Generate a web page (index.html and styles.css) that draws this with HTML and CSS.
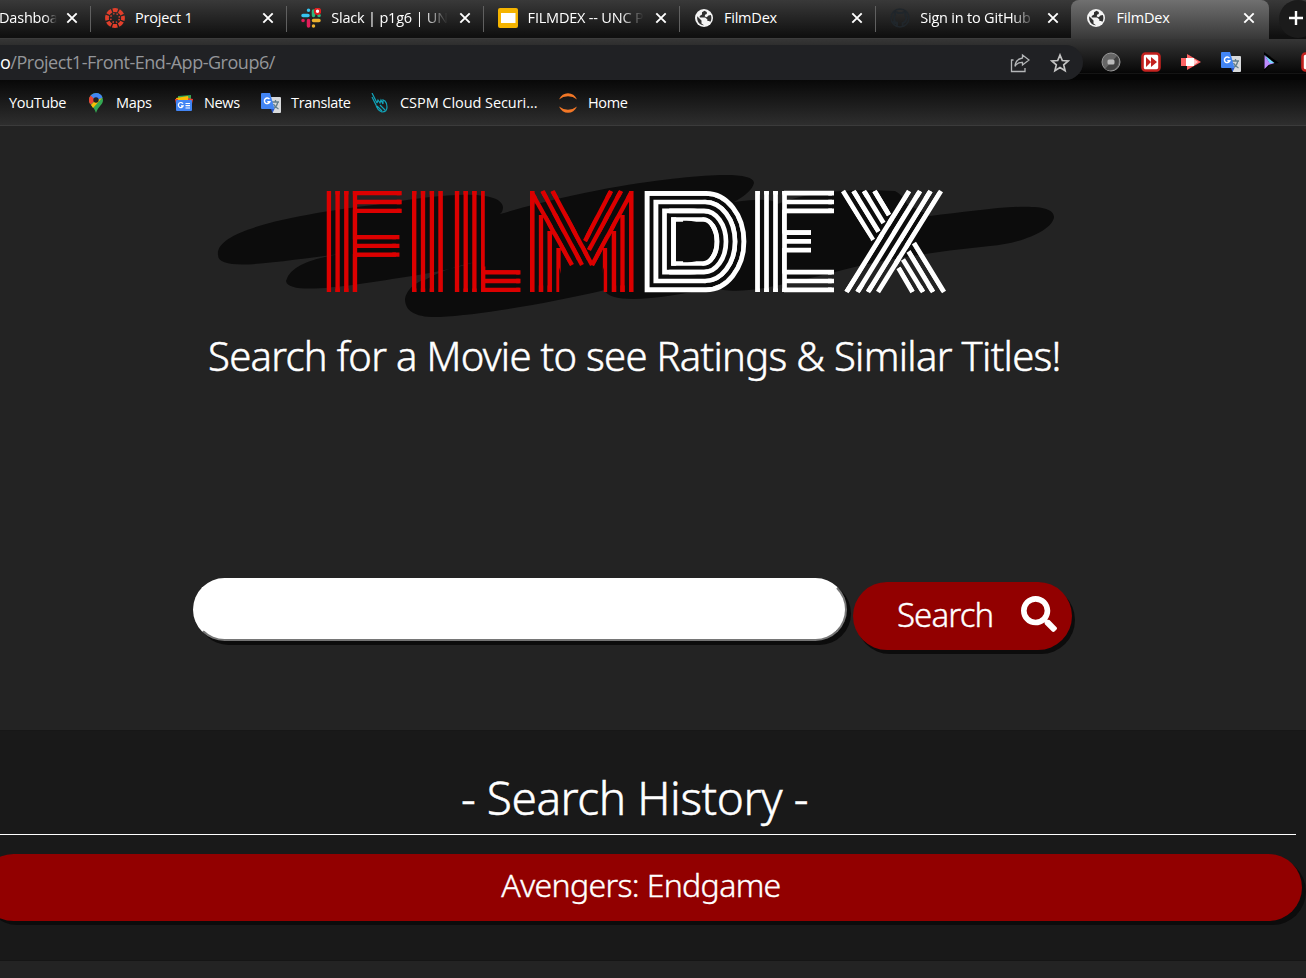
FILE: index.html
```html
<!DOCTYPE html>
<html lang="en">
<head>
<meta charset="utf-8">
<title>FilmDex</title>
<link rel="stylesheet" href="styles.css">
</head>
<body>
<svg class="defs" width="0" height="0" aria-hidden="true">
  <symbol id="x" viewBox="0 0 12 12"><path d="M1.3 1.3 10.7 10.7M10.7 1.3 1.3 10.7" stroke="#fff" stroke-width="1.9"/></symbol>
  <symbol id="globe" viewBox="0 0 20 20"><circle cx="10" cy="10" r="9" fill="#f4f4f4"/><path d="M3.2 8.2 7.5 12.4v3L10 17.2c-4 .3-7.4-3.4-6.8-9ZM10.5 2.8 8 4.2v2.3L5.7 8v1.4h5.5l2.2 2v1.7h1.8l1 1c1.4-2 1.6-4.5.6-7l-2.4.4-1.6 1.7-2-.8.2-1.6 1.8-.8V4Z" fill="#303030"/></symbol>
  <symbol id="gt" viewBox="0 0 20 20"><path d="M8 4h11q1 0 1 1v14q0 1-1 1h-7Z" fill="#d8dadc"/><path d="M11 9h7M14.5 7v2M16.800 9q-1 5-5 7M12.500 11q1 3 5 5" stroke="#607d8b" stroke-width="1.300" fill="none"/><path d="m10 16 3.500 0-2 4Z" fill="#2854c5"/><path d="M1 0h8l4.500 16H1q-1 0-1-1V1q0-1 1-1Z" fill="#4285f4"/><path d="M8.500 6.200A2.800 2.800 0 1 0 8.900 8.700H6.300" stroke="#fff" stroke-width="1.400" fill="none"/></symbol>
</svg>

<header class="browser">
  <nav class="tabs">
    <div class="tab tab-first"><span class="title fade">Dashboa</span><svg class="close"><use href="#x"/></svg></div>
    <div class="tab"><svg class="fav" viewBox="0 0 20 20"><circle cx="10" cy="10" r="8" fill="none" stroke="#e13f2b" stroke-width="3.800" stroke-dasharray="4.900 1.383" stroke-dashoffset="2.450"/><circle cx="10" cy="10" r="4.400" fill="none" stroke="#e13f2b" stroke-width="1.500" stroke-dasharray="1.400 2.056" stroke-dashoffset="-1"/></svg><span class="title">Project 1</span><svg class="close"><use href="#x"/></svg></div>
    <div class="tab"><svg class="fav" viewBox="0 0 20 20"><g stroke-width="3.500" stroke-linecap="round"><path d="M2 7.500h5M7.500 2.200v.1" stroke="#36c5f0"/><path d="M12.500 3v4.500M18 7.500h.1" stroke="#2eb67d"/><path d="M12.500 12.500H18M12.500 18v.1" stroke="#ecb22e"/><path d="M7.500 12.500V18M2 12.500h.1" stroke="#e01e5a"/></g><circle cx="16.500" cy="3.300" r="2.700" fill="#fff" stroke="#e02020" stroke-width="2"/></svg><span class="title fade">Slack | p1g6 | UNC</span><svg class="close"><use href="#x"/></svg></div>
    <div class="tab"><svg class="fav" viewBox="0 0 20 20"><rect width="20" height="20" rx="2" fill="#f5b400"/><rect x="3" y="5" width="14.500" height="10" fill="#fff"/></svg><span class="title fade">FILMDEX -- UNC P</span><svg class="close"><use href="#x"/></svg></div>
    <div class="tab"><svg class="fav"><use href="#globe"/></svg><span class="title">FilmDex</span><svg class="close"><use href="#x"/></svg></div>
    <div class="tab"><svg class="fav" viewBox="0 0 20 20"><path d="M7 19v-4q-3 1-4-2m4 2q-3-1-3-5 0-2 1-3-.500-2 .2-3Q7 4 8 5h4q1.500-1 3-1 .600 1.500.2 3 1 1 1 3 0 4-3.500 5v4" fill="none" stroke="#20262b" stroke-width="2"/><circle cx="10" cy="10" r="9" fill="none" stroke="#20262b" stroke-width="1.500"/></svg><span class="title fade">Sign in to GitHub</span><svg class="close"><use href="#x"/></svg></div>
    <div class="tab active"><svg class="fav"><use href="#globe"/></svg><span class="title">FilmDex</span><svg class="close"><use href="#x"/></svg></div>
    <div class="newtab"><svg width="16" height="16" viewBox="0 0 16 16"><path d="M8 1v14M1 8h14" stroke="#fff" stroke-width="2.400"/></svg></div>
  </nav>
  <div class="toolbar">
    <div class="omnibox">
      <span class="url"><b>o</b>/Project1-Front-End-App-Group6/</span>
      <svg class="share" viewBox="0 0 20 20"><path d="M3.500 7H1.500v11.500H15v-3.500M12.500 2l6.500 5-6.500 5V9.300q-5-.300-7.500 4Q5.500 6 12.500 5Z" fill="none" stroke="#b4b6b8" stroke-width="1.300"/></svg>
      <svg class="star" viewBox="0 0 20 20"><path d="m10 2 2.300 5.500 5.900.500-4.500 3.900 1.400 5.900-5.100-3.200-5.100 3.200 1.400-5.900L1.800 8l5.900-.500Z" fill="none" stroke="#c4c4c4" stroke-width="1.700"/></svg>
    </div>
    <div class="extensions">
      <svg viewBox="0 0 20 20"><circle cx="10" cy="10" r="9" fill="#666" stroke="#999"/><path d="m16 4-12 13a9 9 0 0 0 12-13" fill="#3f3f3f"/><rect x="6.500" y="7.500" width="7" height="5" rx="1.500" fill="#bbb"/></svg>
      <svg viewBox="0 0 20 20"><rect x="1.500" y="1.500" width="17" height="17" rx="3" fill="#fff" stroke="#c3221f" stroke-width="2.600"/><path d="m5 5 5 5-5 5Zm5 0 6 5-6 5Z" fill="#c3221f"/></svg>
      <svg viewBox="0 0 20 20"><path d="M0 6h6V2l14 8-14 8v-4H0Z" fill="#ff6464"/><path d="M5 6h8v8H5Z" fill="#fff"/><path d="m13 7 4 3-4 3Z" fill="#ffc8c8"/></svg>
      <svg viewBox="0 0 20 20"><use href="#gt"/></svg>
      <svg viewBox="0 0 20 20"><path d="m3 0 15 11-8 1-7 7Z" fill="#000"/><path d="m3.500 3 10 8-5 .500Z" fill="#78d8ff"/><path d="m3.500 3 5 8 5 0-6 2-4 4Z" fill="#bd8cff"/></svg>
      <svg viewBox="0 0 20 20"><rect x="1.500" y="1.500" width="17" height="17" rx="3" fill="#fff" stroke="#c3221f" stroke-width="2.600"/></svg>
    </div>
  </div>
  <nav class="bookmarks">
    <span class="mark m-youtube">YouTube</span>
    <span class="mark m-maps"><svg viewBox="0 0 20 20"><path d="M10 0A7 7 0 0 0 3 7c0 5 5 6 7 13 2-7 7-8 7-13a7 7 0 0 0-7-7Z" fill="#34a853"/><path d="M10 7 4.800 11.500Q3 9 3 7q0-2 1.400-4Z" fill="#ea4335"/><path d="M10 7 5 12l2 3 9-10Z" fill="#fbbc04"/><path d="M4.500 2.500Q7 0 10 0q5 0 6.500 4.500L10 8Z" fill="#4285f4"/><path d="m4.400 2.600 4 3.300L4 11Q2 7 4.400 2.600Z" fill="#ea4335"/><circle cx="10" cy="7" r="2.700" fill="#202124"/></svg>Maps</span>
    <span class="mark m-news"><svg viewBox="0 0 20 20"><path d="m4 3 13-1v6H4Z" fill="#34a853"/><path d="m2 5 12-2 1 5H3Z" fill="#fbbc04"/><path d="m14 5 5 1-1 5h-4Z" fill="#ea4335"/><path d="m1 6 3 0v8H2.500Z" fill="#ea4335"/><rect x="2" y="7" width="16" height="11" rx="1" fill="#4285f4"/><path d="M9 10.800a2.500 2.500 0 1 0 .2 2H7M11.500 10.500H16M11.500 12.700H16M11.500 15H16" stroke="#fff" stroke-width="1.200" fill="none"/></svg>News</span>
    <span class="mark m-translate"><svg viewBox="0 0 20 20"><use href="#gt"/></svg>Translate</span>
    <span class="mark m-cspm"><svg viewBox="0 0 20 20"><path d="m2 0 5 10M2 4l4 8q1 5 6 7 5 0 5-5 0-4-2-6l-2-1v4M7 10l1-3 2 3 1-3 2 4M7 13l5 5M10 12l5 5" fill="none" stroke="#11a5ba" stroke-width="1.200"/></svg><span class="mark-name">CSPM Cloud Securi...</span></span>
    <span class="mark m-home"><svg viewBox="0 0 20 20"><path d="M1 6.500Q4 .2 10 .2t9 6.300Q15 3.300 10 3.300T1 6.500ZM1 13.500q3 6.300 9 6.300t9-6.300q-4 3.200-9 3.200t-9-3.200Z" fill="#f37726"/></svg>Home</span>
  </nav>
</header>

<main>
  <section class="hero">
    <h1 class="brand">
      <svg class="logo" width="860" height="160" viewBox="210 166 860 160" role="img" aria-label="FILMDEX">
        <defs>
          <pattern id="stripe-f" patternUnits="userSpaceOnUse" x="0" y="0" width="1306" height="400">
            <path d="M328.900 191v101M337.600 191v101M346.300 191v101M355 191v101M355 193.200h46.700M355 202h46.700M355 210.800h46.700M355 237.100h44.800M355 245.900h44.800M355 254.600h44.800" stroke="#dc0000" stroke-width="4.300"/>
          </pattern>
          <pattern id="stripe-i" patternUnits="userSpaceOnUse" x="0" y="0" width="1306" height="400">
            <path d="M414.200 191v101M423 191v101M431.900 191v101M440.700 191v101" stroke="#dc0000" stroke-width="4.300"/>
          </pattern>
          <pattern id="stripe-l" patternUnits="userSpaceOnUse" x="0" y="0" width="1306" height="400">
            <path d="M457 191v101M465.700 191v101M474.400 191v101M483.200 191v101M483 272.300h37.500M483 281h37.500M483 289.800h37.500" stroke="#dc0000" stroke-width="4.300"/>
          </pattern>
          <pattern id="stripe-m" patternUnits="userSpaceOnUse" x="0" y="0" width="1306" height="400">
            <path d="M532.200 191v101M541 215v77M549.700 231v61M558.500 248v44M605 248v44M614 231v61M622.500 215v77M631.300 191v101M532 193 572 265M542.500 191 582 265M552.500 191 592 265M631 193 592 265M621 191 589 250M611 191 585 241" fill="none" stroke="#dc0000" stroke-width="4.300"/>
          </pattern>
          <pattern id="stripe-d" patternUnits="userSpaceOnUse" x="0" y="0" width="1306" height="400">
            <g fill="none" stroke="#fff" stroke-width="4.700"><path d="M647 193.300H706A38 48.300 0 0 1 706 289.900H647Z"/><path d="M656 202H705A30 39.500 0 0 1 705 281H656Z"/><path d="M664.500 210.800H704A22 30.700 0 0 1 704 272.200H664.500Z"/><path d="M673.500 219.500H703A14 22 0 0 1 703 263.500H673.500Z"/></g>
          </pattern>
          <pattern id="stripe-e" patternUnits="userSpaceOnUse" x="0" y="0" width="1306" height="400">
            <path d="M757.500 191v101M766.500 191v101M775.500 191v101M784.500 191v101M784 193.200h50M784 202h50M784 210.800h50M784 232.600h27M784 241.400h27M784 250.200h27M784 272.200h50M784 281h50M784 289.800h50" stroke="#fff" stroke-width="4.700"/>
          </pattern>
          <pattern id="stripe-x" patternUnits="userSpaceOnUse" x="0" y="0" width="1306" height="400">
            <path d="M843 191 873 240M853.500 191 878.500 231.500M864 191 883.500 223M874.500 191 889 215M914 243 944 292M908.500 251.500 933 292M903 259.500 923 292M898.500 268 912.500 292M846.500 292 909 191M857.500 292 920 191M868 292 930.500 191M878 292 941 191" stroke="#fff" stroke-width="4.700"/>
          </pattern>
        </defs>
        <g fill="none">
          <path d="M218 255C214 228 310 212 390 203C435 195 500 188 503 207Q503 212 500 214C580 191 640 182 680 178C725 173 754 174 754 183Q752 192 734 202C765 198 779 200 775 205C800 195 835 188 895 191Q903 195 907 204L930 216C985 210 1054 198 1054 217C1053 229 1025 243 990 246C930 252 875 261 835 272C790 283 735 298 715 287C665 299 608 305 605 290C550 303 480 315 440 317C415 318 405 311 405 299Q407 285 430 277L412 276C360 284 288 297 286 281Q290 262 340 254C280 261 218 273 218 255Z" fill="#0c0c0c"/>
          <path d="M412 276Q455 269 475 262Q445 268 423 281Z" fill="#232323"/>
        </g>
        <text class="letters" y="292"><tspan x="321" textLength="83" lengthAdjust="spacingAndGlyphs" fill="url(#stripe-f)" stroke="url(#stripe-f)">F</tspan><tspan x="405" textLength="44" lengthAdjust="spacingAndGlyphs" fill="url(#stripe-i)" stroke="url(#stripe-i)">I</tspan><tspan x="450" textLength="73" lengthAdjust="spacingAndGlyphs" fill="url(#stripe-l)" stroke="url(#stripe-l)">L</tspan><tspan class="wide" x="524" textLength="115" lengthAdjust="spacingAndGlyphs" fill="url(#stripe-m)" stroke="url(#stripe-m)">M</tspan><tspan class="wide" x="640" textLength="107" lengthAdjust="spacingAndGlyphs" fill="url(#stripe-d)" stroke="url(#stripe-d)">D</tspan><tspan x="749" textLength="89" lengthAdjust="spacingAndGlyphs" fill="url(#stripe-e)" stroke="url(#stripe-e)">E</tspan><tspan class="wide" x="840" textLength="107" lengthAdjust="spacingAndGlyphs" fill="url(#stripe-x)" stroke="url(#stripe-x)">X</tspan></text>
      </svg>
    </h1>
    <h2 class="tagline">Search for a Movie to see Ratings &amp; Similar Titles!</h2>
    <form class="search">
      <input class="query" type="text" aria-label="Movie title">
      <button class="submit" type="button"><span>Search</span><svg width="36" height="36" viewBox="0 0 512 512"><path fill="#fff" d="M505 442.700 405.300 343c-4.500-4.500-10.600-7-17-7H372c27.600-35.300 44-79.700 44-128C416 93.100 322.900 0 208 0S0 93.100 0 208s93.100 208 208 208c48.300 0 92.700-16.400 128-44v16.300c0 6.400 2.500 12.500 7 17l99.700 99.700c9.400 9.400 24.600 9.400 33.900 0l28.300-28.300c9.400-9.400 9.400-24.600.1-34ZM208 336a128 128 0 1 1 0-256 128 128 0 0 1 0 256Z"/></svg></button>
    </form>
  </section>
  <section class="history">
    <h2 class="history-title">- Search History -</h2>
    <button class="entry" type="button">Avengers: Endgame</button>
  </section>
</main>
</body>
</html>
```
FILE: styles.css
```css
* { box-sizing: border-box; }
body {
  margin: 0;
  width: 1306px;
  height: 978px;
  overflow: hidden;
  background: #232323;
  color: #fff;
  font-family: "Noto Sans", "Open Sans", sans-serif;
}
h1, h2 { margin: 0; font-weight: 300; }
.defs { position: absolute; }

/* Browser chrome */
.browser { height: 126px; font-family: "Open Sans", "Noto Sans", sans-serif; background: #151515; }
.tabs { display: flex; height: 39px; width: 1320px; background: linear-gradient(#393939, #101010 36px); }
.tab {
  display: flex;
  align-items: center;
  flex: none;
  width: 196.300px;
  height: 39px;
  padding: 0 15px 3px 15px;
  border-bottom: 1px solid #3c3c3c;
  background: linear-gradient(#606060, #606060) 0 6px / 1px 26px no-repeat;
}
.tab-first { width: 90px; padding-left: 0; background: none; }
.tab-first .title { margin-left: -1px; margin-right: 8px; }
.tab.active { width: 197.500px; border: 0; border-radius: 8px 8px 0 0; background: linear-gradient(#707070, #383838); padding: 0 17px 4px 15px; }
.fav { width: 20px; height: 20px; margin-right: 10px; flex: none; }
.title { flex: 1; overflow: hidden; white-space: nowrap; font-size: 14.500px; letter-spacing: -.2px; margin-right: 9px; }
.fade { mask-image: linear-gradient(90deg, #000 78%, transparent 98%); }
.close { width: 12px; height: 12px; flex: none; margin-right: -3px; }
.newtab { width: 38px; height: 38px; border-radius: 19px; margin-left: 10px; flex: none; background: #1b1b1b; display: flex; align-items: center; padding-left: 9px; padding-bottom: 2px; }

.toolbar { display: flex; height: 41px; padding-top: 6px; background: linear-gradient(#363636, #060606 34px, #242424 34px, #050505 35px); overflow: hidden; }
.omnibox { display: flex; align-items: center; flex: none; width: 1083px; height: 35px; border-radius: 0 18px 18px 0; background: #202124; padding-right: 13px; }
.url { flex: 1; font-size: 18px; letter-spacing: -.48px; color: #94969a; padding-bottom: 1px; }
.url b { color: #fff; font-weight: 400; }
.share, .star { width: 20px; height: 20px; margin-left: 20px; }
.extensions { display: flex; gap: 20px; padding: 7px 0 0 18px; }
.extensions svg { width: 20px; height: 20px; flex: none; }

.bookmarks { display: flex; height: 46px; border-bottom: 1px solid #3b3b3b; background: linear-gradient(#080808, #2e2e2e); font-size: 14.500px; }
.mark { display: flex; align-items: center; flex: none; white-space: nowrap; letter-spacing: -.35px; }
.mark svg { width: 20px; height: 20px; margin-right: 10px; flex: none; }
.m-youtube { width: 86px; padding-left: 9px; }
.m-maps { width: 88px; }
.m-news { width: 87px; }
.m-translate { width: 109px; }
.m-cspm { width: 188px; }
.mark-name { letter-spacing: -.06px; }

/* Search area */
.hero { height: 605px; padding-top: 40px; border-bottom: 1px solid #171717; }
.brand { height: 160px; padding-left: 210px; line-height: 0; }
.letters { font-family: Inter, sans-serif; font-weight: 900; font-size: 139px; stroke-width: 7px; }
.letters .wide { stroke-width: 13px; }
.tagline { height: 60px; line-height: 60px; padding-left: 208px; font-size: 40px; letter-spacing: -.7px; white-space: nowrap; -webkit-text-stroke: .5px #fff; }
.search { display: flex; align-items: flex-start; padding: 192px 0 0 193px; }
.query {
  width: 654px;
  height: 63px;
  padding: 0 28px;
  border: 2px solid;
  border-color: #fff #767676 #767676 #fff;
  border-radius: 32px;
  background: #fff;
  box-shadow: 4px 4px 0 #0c0c0c;
  outline: 0;
}
.submit {
  display: flex;
  align-items: center;
  width: 219px;
  height: 68px;
  margin: 4px 0 0 6px;
  padding: 0 15px 4px 44px;
  border: 0;
  border-radius: 34px;
  background: #920000;
  box-shadow: 3px 4px 0 #0c0c0c;
  color: #fff;
  font: 300 33px "Noto Sans", sans-serif;
  letter-spacing: -.9px;
  -webkit-text-stroke: .4px #fff;
}
.submit svg { margin-left: auto; }

/* Search history */
.history { height: 230px; background: #191919; border-bottom: 1px solid #151515; overflow: hidden; }
.history-title { width: 1296px; height: 104px; padding: 31px 27px 0 0; border-bottom: 1px solid #fff; text-align: center; font-size: 46px; line-height: 70px; letter-spacing: -.45px; -webkit-text-stroke: .5px #fff; }
.entry {
  display: block;
  width: 1322px;
  height: 67px;
  margin: 19px 0 0 -20px;
  padding: 0 0 6px;
  border: 0;
  border-radius: 34px;
  background: #920000;
  box-shadow: 4px 4px 0 #0c0c0c;
  color: #fff;
  font: 300 32px "Noto Sans", sans-serif;
  letter-spacing: -.65px;
  -webkit-text-stroke: .4px #fff;
}
```
